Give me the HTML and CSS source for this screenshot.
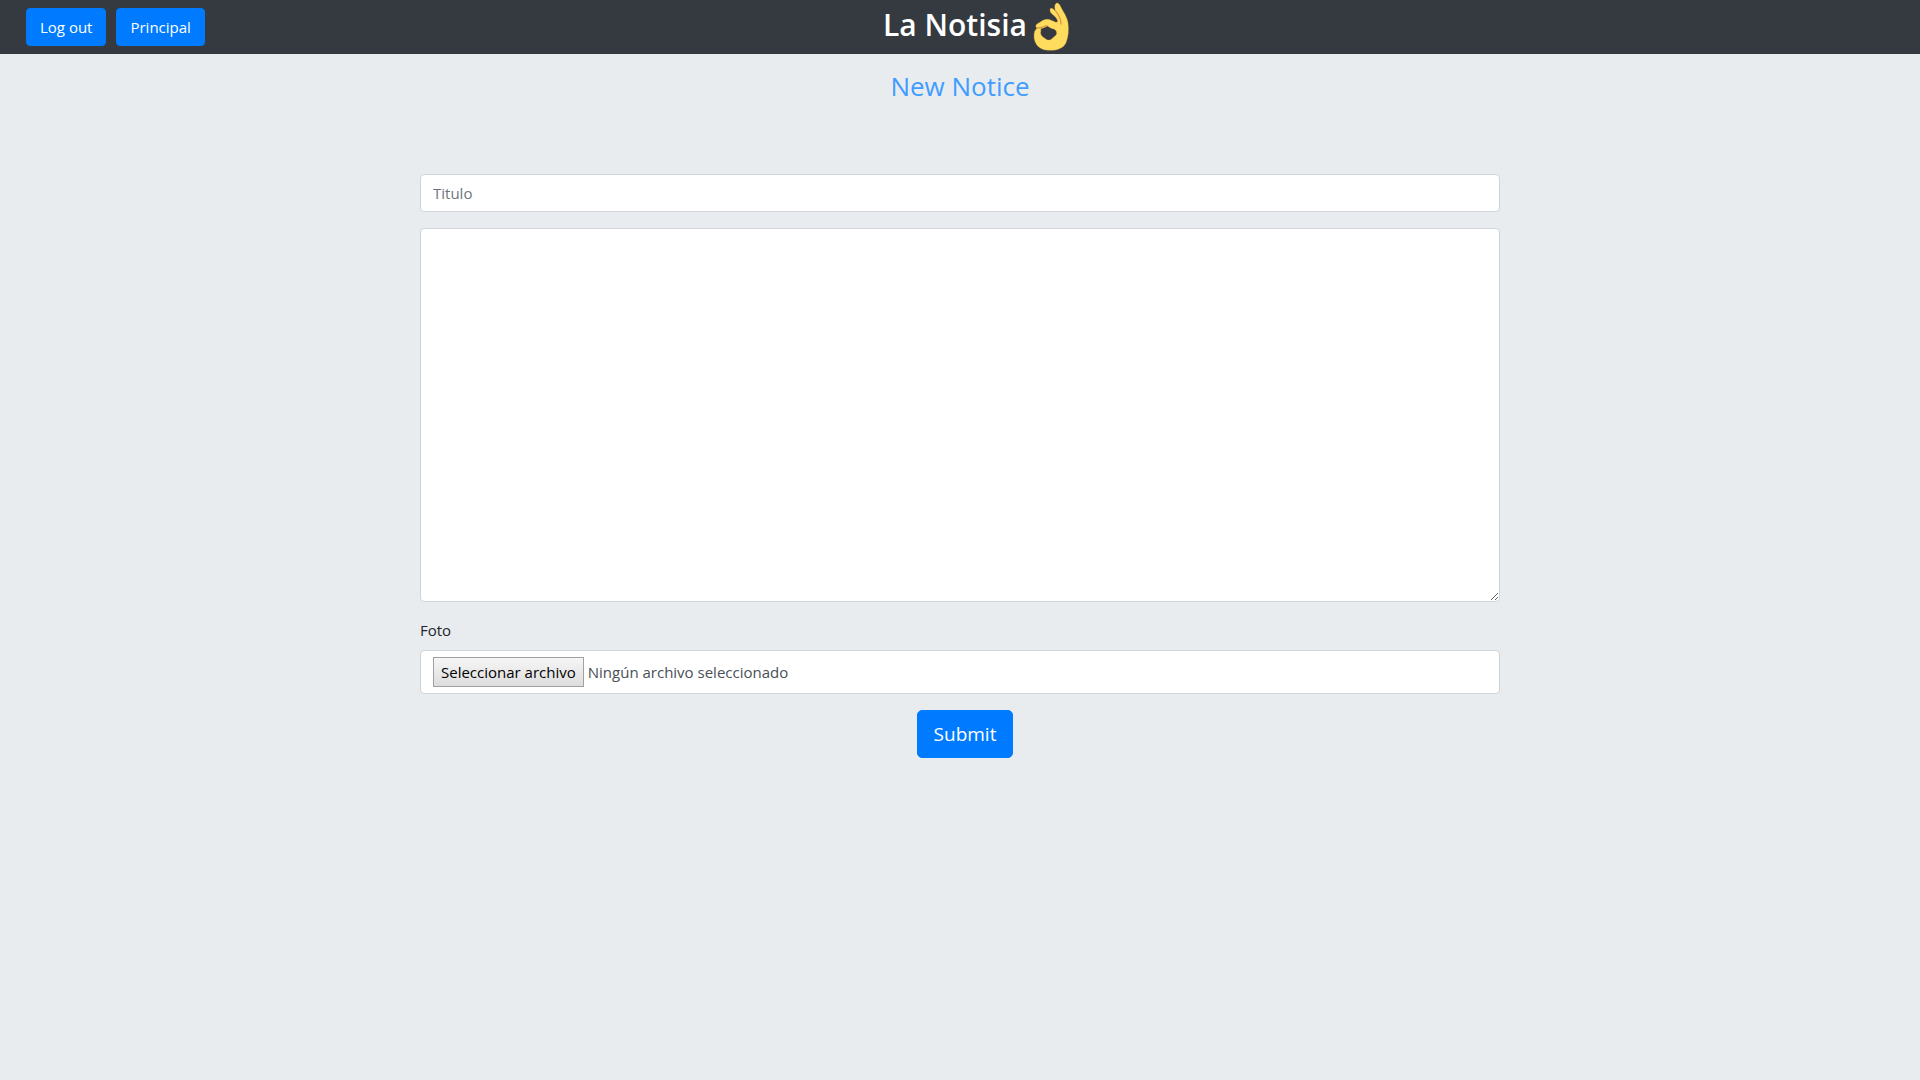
FILE: index.html
```html
<!DOCTYPE html>
<html lang="es">
<head>
<meta charset="utf-8">
<meta name="viewport" content="width=device-width, initial-scale=1">
<title>La Notisia</title>
<link rel="stylesheet" href="styles.css">
</head>
<body>
<header class="navbar">
  <nav class="nav-actions">
    <button type="button" class="btn">Log out</button>
    <button type="button" class="btn">Principal</button>
  </nav>
  <div class="brand">
    <h1 class="brand-name">La Notisia</h1>
    <svg class="brand-icon" viewBox="24 4 108 150" aria-hidden="true">
      <path fill="#ffdc5d" stroke="#e9a94b" stroke-width="1" fill-rule="evenodd" d="M97 7C101 7 106 15 109 22C115 34 126 48 129 66C132 88 130 109 123 126C116 142 97 149 76 149C57 149 44 144 35 132C27 121 25 106 29 92L36 82C32 80 31 74 36 70C47 65 54 56 66 56C76 56 85 62 92 65L98 64C98 55 91 48 82 41C76 36 73 28 76 24C80 20 87 26 92 32C89 24 88 16 91 11C93 8 95 7 97 7ZM67 76C60 80 54 83 47 84C49 89 46 94 47 99C49 107 56 109 61 114C67 120 76 119 81 114C85 109 93 106 95 99C96 90 90 85 83 84C77 83 72 79 67 76Z"/>
      <path fill="none" stroke="#e09a43" stroke-width="4" stroke-linecap="round" d="M92 31C98 40 108 50 108 70M38 82C47 82 57 79 65 75"/>
    </svg>
  </div>
</header>
<main class="page">
  <h2 class="page-title">New Notice</h2>
  <form class="notice-form">
    <input class="field" type="text" placeholder="Titulo" aria-label="Titulo">
    <textarea class="field field-body" aria-label="Texto"></textarea>
    <div class="file-group">
      <label for="foto">Foto</label>
      <div class="field file-field">
        <span class="file-button">Seleccionar archivo</span>
        <span>Ningún archivo seleccionado</span>
        <input class="file-input" type="file" id="foto">
      </div>
    </div>
    <button type="submit" class="btn btn-large">Submit</button>
  </form>
</main>
</body>
</html>
```
FILE: styles.css
```css
*, *::before, *::after {
  box-sizing: border-box;
}

body {
  margin: 0;
  min-height: 100vh;
  background: #e9ecef;
  color: #212529;
  font: 15px/24px "Open Sans", "Noto Sans", sans-serif;
}

.navbar {
  display: grid;
  grid-template-columns: 1fr auto 1fr;
  align-items: center;
  min-height: 54px;
  padding: 0 26px;
  background: #343a40;
}

.nav-actions {
  display: flex;
  gap: 10px;
}

.btn {
  padding: 6px 13px;
  border: 1px solid #007bff;
  border-radius: 4px;
  background: #007bff;
  color: #fff;
  font: inherit;
  cursor: pointer;
}

.brand {
  display: flex;
  align-items: center;
  gap: 6px;
  padding-left: 32px;
}

.brand-name {
  margin: 0;
  padding-bottom: 4px;
  color: #fff;
  font-size: 30px;
  font-weight: 600;
  line-height: 40px;
}

.brand-icon {
  width: 36px;
  height: 50px;
}

.page {
  padding: 14px 16px 0;
}

.page-title {
  margin: 0;
  color: #409cff;
  font-size: 26px;
  font-weight: 400;
  line-height: 36px;
  text-align: center;
}

.notice-form {
  display: flex;
  flex-direction: column;
  gap: 16px;
  max-width: 1080px;
  margin: 70px auto 0;
}

.field {
  display: block;
  width: 100%;
  padding: 6px 12px;
  border: 1px solid #ced4da;
  border-radius: 4px;
  background: #fff;
  color: #495057;
  font: inherit;
}

.field::placeholder {
  color: #6c757d;
  opacity: 1;
}

.field-body {
  height: 374px;
  resize: vertical;
}

.file-group {
  display: flex;
  flex-direction: column;
  gap: 8px;
}

.file-field {
  position: relative;
  display: flex;
  align-items: center;
  gap: 4px;
}

.file-button {
  padding: 2px 7px;
  border: 1px solid #a0a0a0;
  background: linear-gradient(#f6f6f6, #dddddd);
  color: #000;
}

.file-input {
  position: absolute;
  inset: 0;
  width: 100%;
  opacity: 0;
}

.btn-large {
  align-self: center;
  margin-left: 10px;
  padding: 8px 16px;
  border-radius: 5px;
  font-size: 19px;
  line-height: 30px;
}
```
